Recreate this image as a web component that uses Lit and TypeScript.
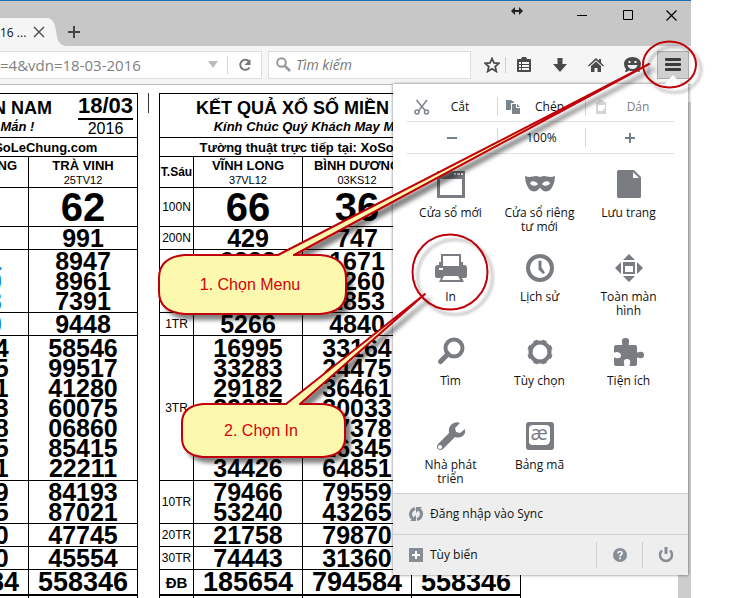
import { LitElement, html, css, svg, nothing } from "lit";
import { customElement, property } from "lit/decorators.js";

const NUMBER_ROWS: { label: string; kind: string; tint?: boolean; cols: string[][] }[] = [
  { label: "100N", kind: "huge", cols: [["66"], ["36"], ["62"]] },
  { label: "200N", kind: "mid", cols: [["429"], ["747"], ["991"]] },
  { label: "400N", kind: "mid", tint: true, cols: [["9222", "3048", "7215"], ["1671", "1260", "2853"], ["8947", "8961", "7391"]] },
  { label: "1TR", kind: "mid", tint: true, cols: [["5266"], ["4840"], ["9448"]] },
  {
    label: "3TR", kind: "mid tall", cols: [
      ["16995", "33283", "29182", "29687", "51430", "80274", "34426"],
      ["33164", "24475", "36461", "30033", "17378", "16345", "64851"],
      ["58546", "99517", "41280", "60075", "06860", "85415", "22211"],
    ],
  },
  { label: "10TR", kind: "mid", cols: [["79466", "53240"], ["79559", "43265"], ["84193", "87021"]] },
  { label: "20TR", kind: "mid", cols: [["21758"], ["79870"], ["47745"]] },
  { label: "30TR", kind: "mid", cols: [["74443"], ["31360"], ["45554"]] },
  { label: "ĐB", kind: "top-prize", cols: [["185654"], ["794584"], ["558346"]] },
];

const PROVINCES = [["VĨNH LONG", "37VL12"], ["BÌNH DƯƠNG", "03KS12"], ["TRÀ VINH", "25TV12"]];

@customElement("lottery-table")
export class LotteryTable extends LitElement {
  @property({ type: Boolean }) tinted = false;

  static styles = css`
    :host { display: block; flex: none; color: #000; font-family: "Liberation Sans", Arial, sans-serif; }
    table { border-collapse: separate; border-spacing: 0; table-layout: fixed; width: 362px; border-top: 1px solid #000; border-left: 1px solid #000; }
    th, td { box-sizing: border-box; padding: 1px 0; border-right: 1px solid #000; border-bottom: 1px solid #000; text-align: center; vertical-align: middle; overflow: hidden; white-space: nowrap; }
    .c-label { width: 34px; }
    .banner { height: 44px; padding: 0; }
    .banner-in { display: flex; align-items: center; }
    .titles { flex: 1; padding-left: 10px; }
    .title { font-size: 18px; line-height: 22px; font-weight: bold; }
    .wish { font-size: 13px; line-height: 16px; font-style: italic; font-weight: bold; }
    .date { width: 55px; margin-right: 4px; font-weight: normal; }
    .day { font-size: 22px; line-height: 24px; font-weight: bold; border-bottom: 2px solid #000; }
    .year { font-size: 16px; line-height: 17px; }
    .live { height: 19px; font-size: 13px; line-height: 16px; font-weight: bold; padding-top: 2px; padding-bottom: 0; }
    .city { font-size: 13px; line-height: 16px; font-weight: bold; }
    .code { font-size: 11px; line-height: 12px; font-weight: normal; }
    .weekday { font-size: 12px; font-weight: bold; }
    .rank { font-size: 12px; font-weight: normal; }
    .huge td { height: 39px; font-size: 40px; line-height: 36px; font-weight: bold; }
    .mid td { font-size: 25px; line-height: 20px; font-weight: bold; }
    .tall td { padding: 2px 0; }
    .top-prize th { height: 26px; font-size: 15px; font-weight: bold; border-bottom-width: 2px; }
    .top-prize td { font-size: 27px; line-height: 22px; font-weight: bold; border-bottom-width: 2px; }
    .blue { color: #1a82d8; }
    .rest { height: 24px; }
  `;

  render() {
    return html`<table>
      <colgroup><col class="c-label" /><col /><col /><col /></colgroup>
      <thead>
        <tr><th class="banner" colspan="4"><div class="banner-in">
          <div class="titles">
            <div class="title">KẾT QUẢ XỔ SỐ MIỀN NAM</div>
            <div class="wish">Kính Chúc Quý Khách May Mắn !</div>
          </div>
          <div class="date"><div class="day">18/03</div><div class="year">2016</div></div>
        </div></th></tr>
        <tr><th class="live" colspan="4">Tường thuật trực tiếp tại: XoSoLeChung.com</th></tr>
        <tr>
          <th class="weekday" scope="col">T.Sáu</th>
          ${PROVINCES.map(([n, c]) => html`<th scope="col"><div class="city">${n}</div><div class="code">${c}</div></th>`)}
        </tr>
      </thead>
      <tbody>
        ${NUMBER_ROWS.map((r) => html`<tr class=${r.kind}>
          <th class="rank" scope="row">${r.label}</th>
          ${r.cols.map((c, i) => html`<td>${c.map((n) => html`<div class=${this.tinted && r.tint && i === 1 ? "blue" : "num"}>${n}</div>`)}</td>`)}
        </tr>`)}
        <tr><th class="rest"></th><td></td><td></td><td></td></tr>
      </tbody>
    </table>`;
  }
}

const ICONS = {
  window: svg`<path fill-rule="evenodd" d="M2 3h28v27H2zM5 11v16h22V11z"/><path fill="#fff" d="M19 5h2v2h-2zM22 5h3v2h-3zM26 5h2v2h-2z"/>`,
  mask: svg`<path fill-rule="evenodd" d="M1 8c5 2 8 0 11 0 2 0 3 1 4 1s2-1 4-1c3 0 6 2 11 0 0 6-2 10-4 13-2 3-7 3-9 1-1-1-1-2-2-2s-1 1-2 2c-2 2-7 2-9-1C3 18 1 14 1 8zM6 15c1 3 6 4 8 1-2-3-6-4-8-1zM26 15c-1 3-6 4-8 1 2-3 6-4 8-1z"/>`,
  page: svg`<path fill-rule="evenodd" d="M4 3.500Q4 2 5.500 2H21l7 7v19.500Q28 30 26.500 30h-21Q4 30 4 28.500zM20 4v6h6z"/>`,
  print: svg`<path fill-rule="evenodd" d="M6 2h20v8h2v3h1q3 0 3 3v8q0 2-2 2h-3l2 4H4l2-4H2q-2 0-2-2v-8q0-3 3-3h1v-3h2zM8 4v10h16V4zM9 24 7 28h18l-2-4z"/><path fill="#fff" d="M4 16h4v2H4z"/>`,
  clock: svg`<path fill-rule="evenodd" d="M16 2a14 14 0 1 0 0 28 14 14 0 1 0 0-28zM16 6a10 10 0 1 1 0 20 10 10 0 1 1 0-20z"/><path d="M14.500 9q1.500-1 3 0v6.500l3.500 5-2 1.500-4.500-4.500z"/>`,
  full: svg`<path d="M16 2l6 6H10zM16 30l6-6H10zM2 16l6-6v12zM30 16l-6-6v12z"/><path fill-rule="evenodd" d="M10 10h12v12H10zM12 14v6h8v-6z"/>`,
  find: svg`<path d="M5.500 25.500 13 18" stroke="currentColor" stroke-width="5" stroke-linecap="round"/><circle cx="19" cy="12" r="8.500" fill="none" stroke="currentColor" stroke-width="4"/>`,
  gear: svg`<circle cx="16" cy="16" r="9.500" fill="none" stroke="currentColor" stroke-width="4"/><path d="M12.600 7.700 11.200 4.300M19.400 7.700l1.400-3.400M24.300 12.600l3.400-1.400M24.300 19.400l3.400 1.400M19.400 24.300l1.400 3.400M12.600 24.300l-1.400 3.400M7.700 19.400l-3.400 1.400M7.700 12.600l-3.400-1.400" stroke="currentColor" stroke-width="4.500"/>`,
  puzzle: svg`<path d="M1 11q0-2 2-2h6q1-1 0-2-1-5 3.500-5T16 7q-1 1 0 2h6q2 0 2 2v5q1 1 2 0 5-1 5 3t-5 3q-1-1-2 0v6q0 2-2 2h-5q-1-1 0-2 1-5-3-5t-3 5q1 1 0 2H3q-2 0-2-2v-6q1-1 2 0 5 1 5-2.500T3 16q-1 1-2 0z"/>`,
  wrench: svg`<path fill-rule="evenodd" d="M30 9q1 6-4 8-3 1-6 0L8 29q-3 2-5 0t0-5L14 13q-1-6 3-9 4-3 8-1l-5 5 1 4 4 1zM5 25a2 2 0 1 0 .1 0z"/>`,
  charset: svg`<path fill-rule="evenodd" d="M5 2h22q3 0 3 3v22q0 3-3 3H5q-3 0-3-3V5q0-3 3-3zM9 5q-4 0-4 4v13q0 3 4 3h12q5 0 5-5V9q0-4-4-4z"/>`,
};

const MENU: [keyof typeof ICONS, string][] = [
  ["window", "Cửa sổ mới"], ["mask", "Cửa sổ riêng tư mới"], ["page", "Lưu trang"],
  ["print", "In"], ["clock", "Lịch sử"], ["full", "Toàn màn hình"],
  ["find", "Tìm"], ["gear", "Tùy chọn"], ["puzzle", "Tiện ích"],
  ["wrench", "Nhà phát triển"], ["charset", "Bảng mã"],
];

@customElement("browser-menu")
export class BrowserMenu extends LitElement {
  static styles = css`
    :host { display: block; color: #111; background: #fff; box-shadow: 0 0 3px rgba(0, 0, 0, 0.55); font: 12px/14px "Open Sans", "Noto Sans", sans-serif; }
    button { display: flex; align-items: center; justify-content: center; margin: 0; padding: 0; border: 0; background: none; color: inherit; font: inherit; }
    svg { display: block; flex: none; }
    .strip { display: grid; grid-template-columns: 90px 88px 1fr; margin: 0 14px; border-bottom: 1px solid #e0e0e0; color: #111; }
    .strip button + button { border-left: 1px solid #d8d8d8; }
    .edit { padding: 13px 0 5px; }
    .edit button { height: 19px; justify-content: flex-start; padding: 0 7px; }
    .edit span { flex: 1; text-align: center; }
    .edit svg { color: #7c858e; }
    .edit .off { color: #808080; }
    .edit .off svg { color: #d4d4d4; }
    .zoom { padding: 6px 0; }
    .zoom button { height: 19px; }
    .zoom svg { color: #76808a; }
    .grid { display: grid; grid-template-columns: repeat(3, 1fr); grid-template-rows: 84px 84px 84px 73px; padding: 14px 15px 0 13px; }
    .grid button { flex-direction: column; justify-content: flex-start; }
    .grid svg { color: #797c80; margin-bottom: 6px; }
    .grid span { max-width: 80px; }
    .ae { font: 20px "Open Sans", sans-serif; fill: #797c80; }
    .foot { display: flex; align-items: center; height: 40px; border-top: 1px solid #cfcfcf; background: #eee; }
    .foot svg { color: #868d95; }
    .foot .main { flex: 1; justify-content: flex-start; gap: 7px; padding-left: 16px; }
    .foot .side { width: 46px; height: 26px; border-left: 1px solid #cfcfcf; }
  `;

  render() {
    return html`
      <div class="strip edit">
        <button>
          <svg width="16" height="16" viewBox="0 0 16 16" fill="none" stroke="currentColor" stroke-width="1.500"><path d="M2.500 1 11.500 12M13 1 4.500 12"/><circle cx="3" cy="13" r="2"/><circle cx="12.500" cy="13" r="2"/></svg>
          <span>Cắt</span></button>
        <button>
          <svg width="16" height="16" viewBox="0 0 16 16" fill="currentColor"><path d="M1 1h5l3 2v1H6v7H1zM7 5h5l3 3v7H7z"/><path d="M11.500 5v3.500H15" fill="none" stroke="#fff"/></svg>
          <span>Chép</span></button>
        <button class="off" disabled>
          <svg width="16" height="16" viewBox="0 0 16 16" fill="currentColor"><path fill-rule="evenodd" d="M3 3h2l1-2h4l1 2h2v12H3zM5 7v5h4l3-3V6H6z"/></svg>
          <span>Dán</span></button>
      </div>
      <div class="strip zoom">
        <button aria-label="Thu nhỏ"><svg width="10" height="10" viewBox="0 0 10 10"><path d="M0 4h10v2H0z" fill="currentColor"/></svg></button>
        <button>100%</button>
        <button aria-label="Phóng to"><svg width="10" height="10" viewBox="0 0 10 10"><path d="M0 4h4V0h2v4h4v2H6v4H4V6H0z" fill="currentColor"/></svg></button>
      </div>
      <div class="grid">
        ${MENU.map(([icon, label]) => html`<button>
          <svg width="32" height="32" viewBox="0 0 32 32" fill="currentColor">${ICONS[icon]}${icon === "charset" ? svg`<text class="ae" x="15" y="20" text-anchor="middle">æ</text>` : nothing}</svg>
          <span>${label}</span></button>`)}
      </div>
      <div class="foot">
        <button class="main">
          <svg width="14" height="16" viewBox="0 0 14 16" fill="none" stroke="currentColor" stroke-width="3"><path d="M6 2.500C1 4 0 10 4 12.500M8 13.500C13 12 14 6 10 3.500"/><path d="M1 15h6V9zM13 1H7v6z" fill="currentColor" stroke="none"/></svg>
          Đăng nhập vào Sync</button>
      </div>
      <div class="foot">
        <button class="main">
          <svg width="14" height="14" viewBox="0 0 14 14"><path d="M0 0h14v14H0z" fill="currentColor"/><path d="M3 6h3V3h2v3h3v2H8v3H6V8H3z" fill="#fff"/></svg>
          Tùy biến</button>
        <button class="side" aria-label="Trợ giúp">
          <svg width="14" height="14" viewBox="0 0 14 14"><circle cx="7" cy="7" r="7" fill="currentColor"/><path d="M5 5.500C5 2.800 9.300 3 9 5.300 8.800 6.800 7 6.700 7 8.500M7 9.500v1.700" fill="none" stroke="#fff" stroke-width="1.600"/></svg></button>
        <button class="side" aria-label="Thoát">
          <svg width="16" height="16" viewBox="0 0 16 16" fill="none" stroke="currentColor" stroke-width="2.500"><path d="M4 3.500a6 6 0 1 0 8 0"/><path d="M8 0v7" stroke-width="3"/></svg></button>
      </div>`;
  }
}

@customElement("app-root")
export class AppRoot extends LitElement {
  static styles = css`
    :host { display: block; position: relative; height: 100vh; overflow: hidden; background: #fff; font-family: "Open Sans", "Noto Sans", sans-serif; }
    .window { position: relative; display: flex; flex-direction: column; height: 100%; margin-right: 38px; }
    button { display: flex; align-items: center; justify-content: center; margin: 0; padding: 0; border: 0; background: none; color: #4a4a4a; }
    svg { display: block; flex: none; }
    .titlebar { display: flex; box-sizing: border-box; height: 46px; border-top: 1px solid #1a70b8; background: #c7c7c7; }
    .tabs { display: flex; flex: 1; align-items: flex-end; }
    .tab { display: flex; align-items: center; box-sizing: border-box; width: 48px; height: 28px; padding-right: 3px; background: #f5f5f5; color: #111; font-size: 12px; white-space: nowrap; }
    .tab span { flex: 1; }
    .curve { color: #f5f5f5; }
    .new-tab { width: 16px; height: 28px; }
    .controls { display: flex; align-items: flex-start; }
    .controls button { width: 46px; height: 29px; color: #000; }
    .controls .close { width: 40px; }
    .resize { margin: 6px 36px 0 0; }
    .toolbar { display: flex; align-items: center; box-sizing: border-box; height: 39px; padding: 0 2px 1px 0; border-bottom: 1px solid #bcbcbc; background: #f5f5f5; }
    .field { display: flex; align-items: center; box-sizing: border-box; height: 28px; border: 1px solid #dedede; background: #fff; }
    .field input { flex: 1; min-width: 0; padding: 0; border: 0; outline: 0; background: none; color: #808080; font: 15px "Open Sans", "Noto Sans", sans-serif; }
    .url { flex: 1; margin-right: 6px; border-left: 0; }
    .url button { width: 34px; height: 18px; border-left: 1px solid #d6d6d6; }
    .drop { margin-right: 9px; }
    .search { width: 203px; margin-right: 8px; padding-left: 7px; gap: 5px; }
    .search input { font-size: 14px; font-style: italic; }
    .search input::placeholder { color: #777; opacity: 1; }
    .tool { width: 36px; height: 28px; }
    .star { width: 27px; height: 16px; border-right: 1px solid #d0d0d0; }
    .burger { box-sizing: border-box; width: 32px; height: 28px; margin-left: 7px; border: 1px solid #aaa; background: #cfcfcf; }
    .content { display: flex; flex: 1; align-items: flex-start; min-height: 0; overflow: hidden; }
    .sheet { display: flex; flex: 1; min-width: 0; overflow: hidden; }
    .tables { display: flex; gap: 10px; padding-top: 8px; margin-left: -224px; }
    .tick { width: 1px; height: 20px; background: #333; }
    .scroll { display: flex; flex-direction: column; align-self: stretch; width: 13px; background: #cdcdcd; }
    .scroll button { width: 13px; height: 17px; background: #f0f0f0; }
    .menu { position: absolute; top: 84px; right: 3px; width: 295px; }
    .notch { position: absolute; top: 75px; right: 9px; color: #fff; }
    .notes { position: absolute; top: 0; left: 0; pointer-events: none; }
    .note-text { font: 16px "Liberation Sans", Arial, sans-serif; fill: #d4000c; text-anchor: middle; }
  `;

  render() {
    return html`
      <div class="window">
        <div class="titlebar">
          <div class="tabs">
            <div class="tab"><span>16 ...</span>
              <button aria-label="Đóng thẻ"><svg width="12" height="12" viewBox="0 0 12 12" stroke="currentColor" stroke-width="1.400"><path d="M1 1l10 10M11 1 1 11"/></svg></button></div>
            <svg class="curve" width="18" height="28" viewBox="0 0 18 28"><path d="M0 0C5 1 7 6 8 13c1 9 3 14 10 15H0z" fill="currentColor"/></svg>
            <button class="new-tab" aria-label="Thẻ mới"><svg width="12" height="12" viewBox="0 0 12 12"><path d="M0 5h5V0h2v5h5v2H7v5H5V7H0z" fill="#444"/></svg></button>
          </div>
          <svg class="resize" width="12" height="8" viewBox="0 0 12 8"><path d="M0 4l4-4v3h4V0l4 4-4 4V5H4v3z" fill="#222"/></svg>
          <div class="controls">
            <button aria-label="Thu nhỏ cửa sổ"><svg width="11" height="11" viewBox="0 0 11 11"><path d="M0 5h10v1H0z" fill="currentColor"/></svg></button>
            <button aria-label="Phóng to cửa sổ"><svg width="11" height="11" viewBox="0 0 11 11" fill="none" stroke="currentColor"><path d="M.5.500h9v9h-9z"/></svg></button>
            <button class="close" aria-label="Đóng"><svg width="11" height="11" viewBox="0 0 11 11" stroke="currentColor" stroke-width="1.200"><path d="M.5.500l10 10M10.500.500l-10 10"/></svg></button>
          </div>
        </div>
        <div class="toolbar">
          <div class="field url">
            <input aria-label="Địa chỉ" value="=4&amp;vdn=18-03-2016" />
            <svg class="drop" width="10" height="7" viewBox="0 0 10 7"><path d="M0 0h10L5 7z" fill="#bbb"/></svg>
            <button aria-label="Tải lại"><svg width="14" height="14" viewBox="0 0 14 14" fill="none" stroke="#777" stroke-width="2"><path d="M11.500 9.500a5 5 0 1 1-.5-6"/><path d="M12.500 1v6h-6z" fill="#777" stroke="none"/></svg></button>
          </div>
          <label class="field search">
            <svg width="15" height="15" viewBox="0 0 15 15" fill="none" stroke="#999" stroke-width="2"><circle cx="5.500" cy="5.500" r="4.300"/><path d="M9 9l5 5" stroke-width="2.600"/></svg>
            <input aria-label="Tìm kiếm" placeholder="Tìm kiếm" />
          </label>
          <button class="star" aria-label="Đánh dấu"><svg width="16" height="16" viewBox="0 0 16 16" fill="none" stroke="currentColor" stroke-width="1.800"><path d="M8 1.500l2 4.500 4.800.4-3.600 3.200 1.100 4.800L8 11.800l-4.300 2.600 1.100-4.800L1.200 6.400 6 6z"/></svg></button>
          <button class="tool" aria-label="Danh sách dấu trang"><svg width="16" height="16" viewBox="0 0 16 16" fill="currentColor"><path fill-rule="evenodd" d="M5 2l1-2h4l1 2h3q1 0 1 1v11q0 1-1 1H2q-1 0-1-1V3q0-1 1-1zM3 5v8h10V5z"/><path d="M3 7h10v1H3zM3 10h10v1H3zM5 5h1v8H5z"/></svg></button>
          <button class="tool" aria-label="Tải xuống"><svg width="14" height="16" viewBox="0 0 14 16" fill="currentColor"><path d="M4.500 1h5v6H14l-7 8-7-8h4.500z"/></svg></button>
          <button class="tool" aria-label="Trang chủ"><svg width="16" height="16" viewBox="0 0 16 16" fill="currentColor"><path d="M3 9l5-4.500L13 9v6H9.500v-4h-3v4H3zM0 8.500 8 1l3 2.800V2h2v3.700L16 8.500l-1 1-7-6.300L1 9.500z"/></svg></button>
          <button class="tool" aria-label="Trò chuyện"><svg width="17" height="16" viewBox="0 0 17 16"><path d="M8.500 0C13.500 0 17 3 17 7q0 3-2 5l1 3q-2 0-4-1.500Q8 15 5 13.500 3 15 1 15l1-3Q0 10 0 7c0-4 3.500-7 8.500-7z" fill="currentColor"/><path d="M4.500 4h2v2h-2zM10.500 4h2v2h-2zM3.500 8h10q-1 4-5 4t-5-4z" fill="#f5f5f5"/></svg></button>
          <button class="burger" aria-label="Trình đơn"><svg width="16" height="13" viewBox="0 0 16 13" fill="#3c3c3c"><rect width="16" height="3" rx="1"/><rect y="5" width="16" height="3" rx="1"/><rect y="10" width="16" height="3" rx="1"/></svg></button>
        </div>
        <div class="content">
          <div class="sheet"><div class="tables">
            <lottery-table tinted></lottery-table>
            <div class="tick"></div>
            <lottery-table></lottery-table>
          </div></div>
          <div class="scroll"><button aria-label="Cuộn lên"><svg width="7" height="5" viewBox="0 0 7 5"><path d="M0 5l3.500-4L7 5z" fill="#555"/></svg></button></div>
        </div>
        <browser-menu class="menu"></browser-menu>
        <svg class="notch" width="18" height="10" viewBox="0 0 18 10"><path d="M0 10 9 0l9 10z" fill="currentColor"/></svg>
      </div>
      <svg class="notes" width="729" height="598" viewBox="0 0 729 598">
        <defs><filter id="shade" x="-20%" y="-20%" width="150%" height="150%"><feDropShadow dx="5" dy="5" stdDeviation="2" flood-color="#000" flood-opacity=".5"/></filter>
        <filter id="soft" x="-20%" y="-20%" width="150%" height="150%"><feDropShadow dx="5" dy="5" stdDeviation="1.500" flood-color="#000" flood-opacity=".3"/></filter></defs>
        <g fill="none" stroke="#c00008" stroke-width="2" filter="url(#soft)"><ellipse cx="669.500" cy="64.500" rx="26.500" ry="23"/><circle cx="450" cy="272" r="37.500"/></g>
        <g fill="#fcf9ae" stroke="#c00008" stroke-width="2" stroke-linejoin="round" filter="url(#shade)">
          <path d="M185 255H278L649 64 294 255H320Q346 257 346 278V292Q346 312 320 314H185Q159 312 159 292V278Q159 257 185 255z"/>
          <path d="M203 404H286L425 294 300 404H323Q345 406 345 423V438Q345 455 323 457H203Q182 455 182 438V423Q182 406 203 404z"/>
        </g>
        <text class="note-text" x="250" y="290">1. Chọn Menu</text>
        <text class="note-text" x="261" y="436">2. Chọn In</text>
      </svg>`;
  }
}
